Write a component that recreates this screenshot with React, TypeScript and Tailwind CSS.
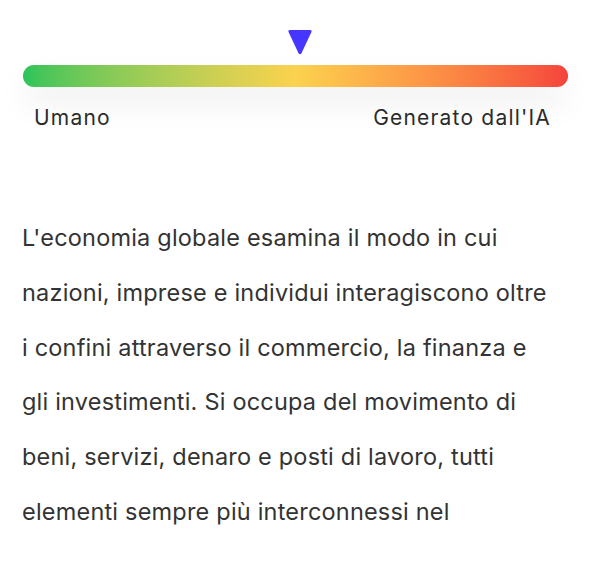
export default function App() {
  return (
    <div className="min-h-[564px] w-[600px] bg-white font-['Inter',sans-serif] text-[#2b2b2b]">
      {/* Meter */}
      <div className="pl-[23px] pr-[32px] pt-[29px]">
        <div className="relative h-[26px]">
          <svg
            className="absolute left-[264px] top-0"
            width="26"
            height="26"
            viewBox="0 0 26 26"
          >
            <path
              d="M3 1 H23 Q25.5 1 24.2 3.4 L14.6 24 Q13 26.5 11.4 24 L1.8 3.4 Q0.5 1 3 1 Z"
              fill="#4636ff"
            />
          </svg>
        </div>
        <div className="mt-[10px] h-[22px] rounded-full bg-gradient-to-r from-[#26c45a] via-[#fbd24e] to-[#f4433c] shadow-[0_16px_32px_rgba(0,0,0,0.07)]" />
        <div className="mt-[17px] flex justify-between pl-[11px] pr-[17px] text-[21px] leading-[28px] tracking-[1.2px]">
          <span>Umano</span>
          <span>Generato dall'IA</span>
        </div>
      </div>

      {/* Paragraph */}
      <p className="mt-[79px] w-[580px] pl-[22px] text-[23.5px] leading-[54.8px] tracking-[0.2px] text-[#333333]">
        L'economia globale esamina il modo in cui
        <br />
        nazioni, imprese e individui interagiscono oltre
        <br />
        i confini attraverso il commercio, la finanza e
        <br />
        gli investimenti. Si occupa del movimento di
        <br />
        beni, servizi, denaro e posti di lavoro, tutti
        <br />
        elementi sempre più interconnessi nel
      </p>
    </div>
  );
}
